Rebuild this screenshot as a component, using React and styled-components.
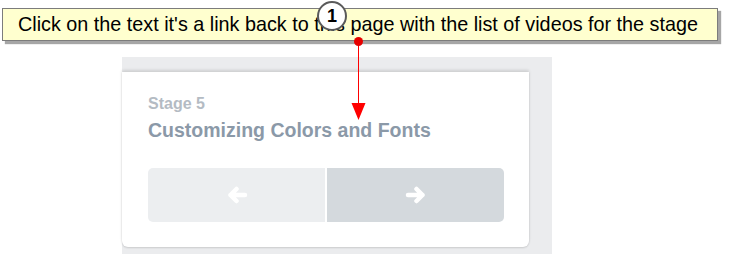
import React from 'react';
import styled, { createGlobalStyle } from 'styled-components';

const GlobalStyle = createGlobalStyle`
  body {
    margin: 0;
    background: #ffffff;
    font-family: 'Liberation Sans', Arial, sans-serif;
  }
`;

const Canvas = styled.div`
  position: relative;
  width: 729px;
  height: 254px;
  overflow: hidden;
  box-sizing: border-box;
  padding: 57px 0 0 122px;
  display: flex;
  align-items: flex-start;
`;

const StagePanel = styled.div`
  width: 430px;
  height: 197px;
  box-sizing: border-box;
  padding-top: 15px;
  background-color: #ebecee;
`;

const Card = styled.div`
  width: 407px;
  height: 175px;
  box-sizing: border-box;
  padding: 23px 25px 25px 26px;
  background-color: #ffffff;
  border-radius: 0 0 6px 6px;
  box-shadow: 0 -2px 3px rgba(0, 0, 0, 0.12), 0 1px 2px rgba(0, 0, 0, 0.14);
  display: flex;
  flex-direction: column;
`;

const StageLabel = styled.div`
  font-size: 16px;
  line-height: 18px;
  font-weight: bold;
  color: #b4bbc3;
`;

const StageTitle = styled.div`
  margin-top: 5px;
  font-size: 19.5px;
  line-height: 24px;
  font-weight: bold;
  color: #8b99a8;
  cursor: pointer;
`;

const NavRow = styled.div`
  margin-top: 26px;
  display: flex;
  gap: 2px;
`;

const NavButton = styled.div`
  flex: 1;
  height: 54px;
  display: flex;
  align-items: center;
  justify-content: center;
  background-color: ${(p) => (p.$side === 'next' ? '#d4d9dd' : '#eceef0')};
  border-radius: ${(p) => (p.$side === 'next' ? '0 5px 5px 0' : '5px 0 0 5px')};
`;

const Callout = styled.div`
  position: absolute;
  left: 2px;
  top: 8px;
  width: 716px;
  height: 33px;
  box-sizing: border-box;
  padding-left: 15px;
  display: flex;
  align-items: center;
  background-color: #ffffcf;
  border: 1px solid #7c7c7c;
  box-shadow: 3px 3px 1px rgba(0, 0, 0, 0.35);
  font-family: Arial, 'Liberation Sans', sans-serif;
  font-size: 19.8px;
  color: #000000;
  white-space: nowrap;
`;

const Badge = styled.div`
  position: absolute;
  left: 317px;
  top: 1px;
  width: 30px;
  height: 30px;
  box-sizing: border-box;
  border: 2px solid #5a5a5a;
  border-radius: 50%;
  background-color: #ffffff;
  display: flex;
  align-items: center;
  justify-content: center;
  font-family: Arial, 'Liberation Sans', sans-serif;
  font-weight: bold;
  font-size: 18px;
  color: #000000;
`;

const Pointer = styled.svg`
  position: absolute;
  left: 0;
  top: 0;
  pointer-events: none;
`;

const Arrow = ({ dir }) => (
  <svg width="22" height="18" viewBox="0 0 22 18">
    {dir === 'left' ? (
      <path d="M19 9 H4.5 M10.5 3 L4.5 9 L10.5 15" fill="none" stroke="#ffffff" strokeWidth="4.5" strokeLinecap="round" strokeLinejoin="round" />
    ) : (
      <path d="M3 9 H17.5 M11.5 3 L17.5 9 L11.5 15" fill="none" stroke="#ffffff" strokeWidth="4.5" strokeLinecap="round" strokeLinejoin="round" />
    )}
  </svg>
);

const App = () => (
  <Canvas>
    <GlobalStyle />
    <StagePanel>
      <Card>
        <StageLabel>Stage 5</StageLabel>
        <StageTitle>Customizing Colors and Fonts</StageTitle>
        <NavRow>
          <NavButton $side="prev"><Arrow dir="left" /></NavButton>
          <NavButton $side="next"><Arrow dir="right" /></NavButton>
        </NavRow>
      </Card>
    </StagePanel>

    <Callout>Click on the text it's a link back to this page with the list of videos for the stage</Callout>
    <Badge>1</Badge>
    <Pointer width="729" height="254" viewBox="0 0 729 254">
      <line x1="358.5" y1="42" x2="358.5" y2="104" stroke="#ff0000" strokeWidth="1" />
      <polygon points="351.5,103 365.5,103 358.5,120" fill="#ff0000" />
      <circle cx="358.5" cy="41.5" r="4.5" fill="#e60000" />
    </Pointer>
  </Canvas>
);

export default App;
